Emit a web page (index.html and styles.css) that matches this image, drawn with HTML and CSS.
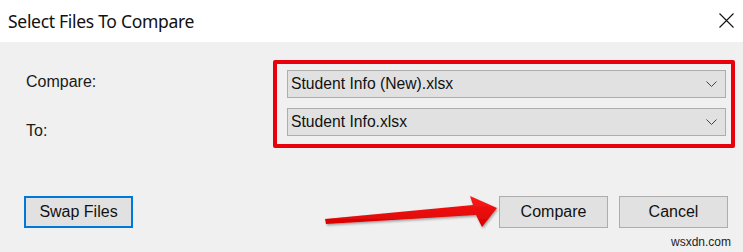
FILE: index.html
```html
<!DOCTYPE html>
<html>
<head>
<meta charset="utf-8">
<link rel="stylesheet" href="styles.css">
</head>
<body>
<div class="dialog">
  <div class="titlebar">
    <span class="title">Select Files To Compare</span>
    <svg class="close" width="15" height="15" viewBox="0 0 15 15"><path d="M0.5 0.5 L14.5 14.5 M14.5 0.5 L0.5 14.5" stroke="#111" stroke-width="1.1" fill="none"/></svg>
  </div>
  <div class="content">
    <div class="form">
      <div class="labels">
        <div class="label first">Compare:</div>
        <div class="label second">To:</div>
      </div>
      <div class="box">
        <div class="combo"><span>Student Info (New).xlsx</span><svg class="chev" width="11" height="6" viewBox="0 0 11 6"><path d="M0.5 0.5 L5.5 5.5 L10.5 0.5" stroke="#444" stroke-width="1" fill="none"/></svg></div>
        <div class="combo"><span>Student Info.xlsx</span><svg class="chev" width="11" height="6" viewBox="0 0 11 6"><path d="M0.5 0.5 L5.5 5.5 L10.5 0.5" stroke="#444" stroke-width="1" fill="none"/></svg></div>
      </div>
    </div>
    <div class="buttons">
      <button class="btn focus">Swap Files</button>
      <div class="spacer"></div>
      <button class="btn">Compare</button>
      <button class="btn">Cancel</button>
    </div>
    <div class="watermark">wsxdn.com</div>
  </div>
  <svg class="arrow" width="743" height="252" viewBox="0 0 743 252">
    <defs>
      <linearGradient id="g" x1="0" y1="0" x2="0" y2="1">
        <stop offset="0" stop-color="#ff1a1a"/>
        <stop offset="1" stop-color="#d40000"/>
      </linearGradient>
      <filter id="sh" x="-10%" y="-30%" width="120%" height="160%">
        <feDropShadow dx="1" dy="1.5" stdDeviation="1.2" flood-color="#000" flood-opacity="0.35"/>
      </filter>
    </defs>
    <polygon points="325,219 473,205 470,196 497,208 482,227 476,215 326,224" fill="url(#g)" filter="url(#sh)"/>
  </svg>
</div>
</body>
</html>
```
FILE: styles.css
```css
html, body {
  margin: 0;
  padding: 0;
}
body {
  width: 743px;
  height: 252px;
  overflow: hidden;
  background: #f0f0f0;
  font-family: "Liberation Sans", Arial, sans-serif;
}
.dialog {
  position: relative;
  width: 743px;
  height: 252px;
}
.titlebar {
  height: 42px;
  background: #ffffff;
  display: flex;
  align-items: center;
  justify-content: space-between;
  padding: 0 9px 0 8px;
  box-sizing: border-box;
}
.title {
  font-family: "Noto Sans", sans-serif;
  font-size: 17.5px;
  color: #111;
  letter-spacing: -0.3px;
  margin-top: -1px;
}
.close {
  display: block;
  margin-top: -2px;
}
.content {
  background: #f0f0f0;
  height: 210px;
}
.form {
  display: flex;
  padding: 18px 8px 0 26px;
}
.labels {
  width: 247px;
  display: flex;
  flex-direction: column;
}
.label {
  font-size: 16px;
  color: #1a1a1a;
  height: 28px;
  line-height: 28px;
}
.label.first {
  margin-top: 8px;
}
.label.second {
  margin-top: 21px;
}
.box {
  width: 462px;
  height: 88px;
  box-sizing: border-box;
  border: 4px solid #e8000d;
  border-radius: 2px;
  padding: 6px 5px 0 10px;
  display: flex;
  flex-direction: column;
  gap: 10px;
}
.combo {
  height: 28px;
  box-sizing: border-box;
  border: 1px solid #adadad;
  background: #e1e1e1;
  display: flex;
  align-items: center;
  justify-content: space-between;
  padding: 0 8px 0 3px;
  font-size: 15.7px;
  color: #111;
}
.chev {
  display: block;
}
.buttons {
  display: flex;
  align-items: center;
  padding: 0 15px 0 24px;
  margin-top: 48px;
  gap: 11px;
}
.spacer {
  flex: 1;
}
.btn {
  width: 109px;
  height: 32px;
  box-sizing: border-box;
  border: 1px solid #adadad;
  background: #e1e1e1;
  font-family: "Liberation Sans", Arial, sans-serif;
  font-size: 16px;
  color: #111;
  padding: 0;
  margin: 0;
}
.btn.focus {
  border: 2px solid #0078d7;
}
.watermark {
  text-align: right;
  padding-right: 12px;
  margin-top: 7px;
  font-size: 12px;
  color: #222;
  line-height: 14px;
}
.arrow {
  position: absolute;
  left: 0;
  top: 0;
  pointer-events: none;
}
```
